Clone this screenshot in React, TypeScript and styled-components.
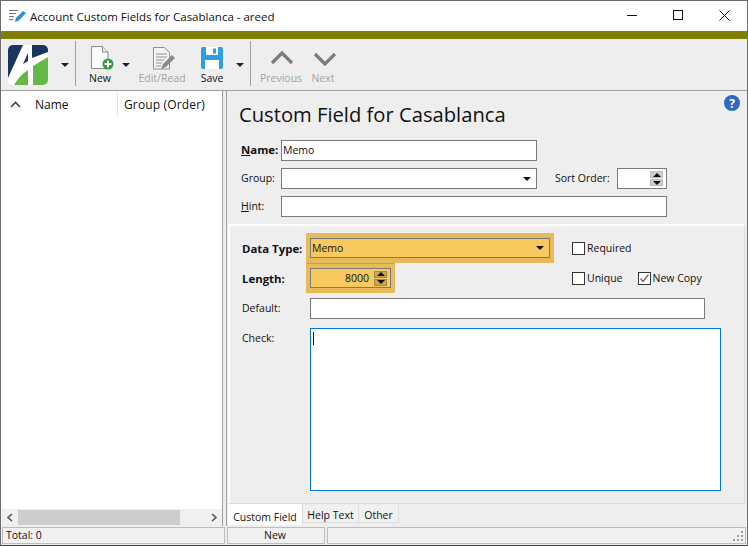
import { FC } from 'react';
import styled, { createGlobalStyle } from 'styled-components';

const Global = createGlobalStyle`
  html, body { margin: 0; padding: 0; background: #fff; }
  * { box-sizing: border-box; }
  body { font-family: "Open Sans", "Noto Sans", sans-serif; font-size: 10.5px; color: #111; }
`;

const Window = styled.div`
  width: 748px;
  height: 546px;
  display: flex;
  flex-direction: column;
  border: 1px solid #6d6d6d;
  border-bottom-color: #444;
  background: #eee;
  overflow: hidden;
`;

const TitleBar = styled.div`
  height: 30px;
  flex: none;
  background: #fff;
  display: flex;
  align-items: center;
  padding-left: 8px;
  font-size: 11.5px;
  color: #111;
`;

const TitleText = styled.div`
  margin-left: 3px;
  flex: 1;
`;

const WinButton = styled.div`
  width: 46px;
  height: 28px;
  align-self: flex-start;
  display: flex;
  align-items: center;
  justify-content: center;
`;

const ColorBar = styled.div`
  height: 8px;
  flex: none;
  background: #808000;
`;

const Toolbar = styled.div`
  height: 52px;
  flex: none;
  background: #eee;
  border-bottom: 1px solid #a0a0a0;
  display: flex;
  align-items: flex-start;
  padding: 2px 0 0 7px;
`;

const Separator = styled.div`
  width: 1px;
  height: 45px;
  background: #a0a0a0;
  margin: 0 9px 0 6px;
`;

const LogoBox = styled.div`
  width: 40px;
  height: 40px;
  margin-top: 4px;
  flex: none;
`;

const ToolButton = styled.div<{ $w: number; $off?: boolean }>`
  width: ${p => p.$w}px;
  flex: none;
  height: 46px;
  display: flex;
  flex-direction: column;
  align-items: center;
  font-size: 10.5px;
  line-height: 14px;
  color: ${p => (p.$off ? '#a3a3a3' : '#111')};
`;

const ToolIcon = styled.div`
  height: 29px;
  display: flex;
  align-items: flex-start;
  margin-bottom: 1px;
`;

const Caret = styled.div<{ $l: number; $r: number }>`
  width: 0;
  height: 0;
  flex: none;
  margin: 22px ${p => p.$r}px 0 ${p => p.$l}px;
  border-left: 4px solid transparent;
  border-right: 4px solid transparent;
  border-top: 4px solid #222;
`;

const Body = styled.div`
  flex: 1;
  min-height: 0;
  display: flex;
`;

const LeftPane = styled.div`
  width: 222px;
  flex: none;
  background: #fff;
  display: flex;
  flex-direction: column;
  border-right: 1px solid #a0a0a0;
`;

const GridHeader = styled.div`
  height: 27px;
  flex: none;
  display: flex;
  align-items: center;
  font-size: 12px;
`;

const SortCell = styled.div`
  width: 34px;
  padding-left: 9px;
  display: flex;
`;

const NameCell = styled.div`
  width: 83px;
  height: 24px;
  line-height: 24px;
  border-right: 1px solid #e4e4e4;
`;

const GroupCell = styled.div`
  padding-left: 6px;
  white-space: nowrap;
  letter-spacing: 0.15px;
`;

const GridBody = styled.div`
  flex: 1;
`;

const ScrollBar = styled.div`
  height: 17px;
  flex: none;
  background: #f0f0f0;
  display: flex;
  align-items: center;
`;

const ScrollArrow = styled.div`
  width: 17px;
  height: 17px;
  flex: none;
  display: flex;
  align-items: center;
  justify-content: center;
`;

const ScrollTrack = styled.div`
  flex: 1;
  height: 15px;
`;

const ScrollThumb = styled.div`
  width: 162px;
  height: 15px;
  background: #cdcdcd;
`;

const RightPane = styled.div`
  flex: 1;
  margin-left: 3px;
  background: #eee;
  border-left: 1px solid #a0a0a0;
  display: flex;
  flex-direction: column;
  position: relative;
`;

const Help = styled.div`
  position: absolute;
  right: 7px;
  top: 4px;
`;

const Heading = styled.h1`
  margin: 0;
  padding: 9px 0 0 12px;
  height: 49px;
  font-size: 20.2px;
  font-weight: 400;
  line-height: 28px;
  color: #111;
`;

const TopForm = styled.div`
  padding-left: 14px;
  width: 450px;
  display: flex;
  flex-direction: column;
  gap: 7px;
`;

const Row = styled.div`
  display: flex;
  align-items: center;
  height: 21px;

  label,
  span {
    padding-bottom: 2px;
  }
`;

const Label = styled.label<{ $w: number; $bold?: boolean; $top?: boolean }>`
  width: ${p => p.$w}px;
  flex: none;
  align-self: ${p => (p.$top ? 'flex-start' : 'auto')};
  margin-top: ${p => (p.$top ? '3px' : 0)};
  padding-bottom: ${p => (p.$bold || p.$top ? 0 : '2px')};
  font-size: ${p => (p.$bold ? '11.4px' : '10.5px')};
  font-weight: ${p => (p.$bold ? 700 : 400)};
  color: #111;
  white-space: nowrap;
`;

const Field = styled.div<{ $w: number; $h?: number; $accent?: boolean; $hot?: boolean }>`
  width: ${p => p.$w}px;
  height: ${p => p.$h ?? 21}px;
  flex: none;
  background: ${p => (p.$hot ? '#f8c95e' : '#fff')};
  border: 1px solid ${p => (p.$accent ? '#0078d7' : '#7a7a7a')};
  display: flex;
  align-items: center;
  justify-content: space-between;
  font-size: 10.5px;
  padding: 0 3px 0 1px;
  color: #111;
  position: relative;
`;

const FieldValue = styled.span<{ $right?: boolean }>`
  flex: 1;
  text-align: ${p => (p.$right ? 'right' : 'left')};
  padding-right: ${p => (p.$right ? '5px' : 0)};
`;

const Spin = styled.div`
  display: flex;
  flex-direction: column;
  gap: 1px;
`;

const SpinPart = styled.div<{ $hot?: boolean }>`
  width: 13px;
  height: 7px;
  background: ${p => (p.$hot ? '#c9a65a' : '#cfcfcf')};
  border: 1px solid ${p => (p.$hot ? '#a58a4c' : '#bbb')};
  display: flex;
  align-items: center;
  justify-content: center;
`;

const Up = styled.div`
  width: 0;
  height: 0;
  border-left: 4px solid transparent;
  border-right: 4px solid transparent;
  border-bottom: 4px solid #111;
`;

const Down = styled.div`
  width: 0;
  height: 0;
  border-left: 4px solid transparent;
  border-right: 4px solid transparent;
  border-top: 4px solid #111;
`;

const SelectCaret = styled.div`
  width: 0;
  height: 0;
  margin-right: 2px;
  border-left: 4px solid transparent;
  border-right: 4px solid transparent;
  border-top: 4px solid #111;
`;

const SortLabel = styled.span`
  width: 62px;
  flex: none;
  margin-left: 18px;
  font-size: 10.5px;
  white-space: nowrap;
`;

const TabPage = styled.div`
  margin: 7px 2px 0 1px;
  height: 280px;
  flex: none;
  border: 2px solid #fff;
  border-bottom: 1px solid #dcdcdc;
  border-right: 1px solid #dcdcdc;
  display: flex;
  flex-direction: column;
  padding: 7px 0 0 0;
`;

const PageRow = styled.div<{ $h: number; $mb?: number }>`
  height: ${p => p.$h}px;
  margin-bottom: ${p => p.$mb ?? 0}px;
  display: flex;
  align-items: center;
  padding-left: 12px;
`;

const Hot = styled.div<{ $line?: boolean }>`
  background: #e8bb5a;
  padding: 5px 4px;
  height: 30px;
  display: flex;
  flex: none;
  border-top: ${p => (p.$line ? '1px solid #e89a2c' : 'none')};
  padding-top: ${p => (p.$line ? '4px' : '5px')};
`;

const CheckWrap = styled.label<{ $ml: number }>`
  margin-left: ${p => p.$ml}px;
  display: flex;
  align-items: center;
  font-size: 10.5px;
  white-space: nowrap;
  color: #111;
`;

const CheckBox = styled.span`
  width: 13px;
  height: 13px;
  background: #fff;
  border: 1px solid #333;
  margin-right: 2px;
  display: flex;
  align-items: center;
  justify-content: center;
`;

const TextCursor = styled.div`
  position: absolute;
  left: 2px;
  top: 3px;
  width: 1px;
  height: 13px;
  background: #111;
`;

const TabStrip = styled.div`
  height: 22px;
  flex: none;
  margin: 0 0 0 1px;
  display: flex;
  align-items: flex-start;
`;

const Tab = styled.div<{ $w: number; $active?: boolean }>`
  width: ${p => p.$w}px;
  height: ${p => (p.$active ? 21 : 18)}px;
  margin-top: ${p => (p.$active ? 0 : 1)}px;
  padding-top: ${p => (p.$active ? 6 : 3)}px;
  background: ${p => (p.$active ? '#fff' : '#f1f1f1')};
  border-right: 1px solid #dcdcdc;
  border-bottom: ${p => (p.$active ? 'none' : '1px solid #dcdcdc')};
  font-size: 10.5px;
  line-height: 14px;
  color: #111;
  text-align: center;
  white-space: nowrap;
`;

const StatusBar = styled.div`
  height: 19px;
  flex: none;
  display: flex;
  gap: 2px;
  background: #eee;
  padding: 1px 1px 0 1px;
`;

const StatusCell = styled.div<{ $w?: number; $center?: boolean }>`
  width: ${p => (p.$w ? `${p.$w}px` : 'auto')};
  flex: ${p => (p.$w ? 'none' : 1)};
  height: 17px;
  background: #f1f1f1;
  border: 1px solid #bdbdbd;
  font-size: 10.5px;
  line-height: 15px;
  padding-left: ${p => (p.$center ? 0 : 3)}px;
  padding-right: ${p => (p.$center ? 2 : 0)}px;
  text-align: ${p => (p.$center ? 'center' : 'left')};
  position: relative;
`;

const Grip = styled.svg`
  position: absolute;
  right: 1px;
  bottom: 1px;
`;

const Logo: FC = () => (
  <svg width="40" height="40" viewBox="0 0 40 40">
    <rect width="40" height="40" rx="5" fill="#fff" />
    <path d="M0 33V5a5 5 0 0 1 5-5h10Z" fill="#1b365d" />
    <path d="M24 0h11a5 5 0 0 1 5 5v2L24 13Z" fill="#1b365d" />
    <path d="M20 8v8l-5 3Z" fill="#1b365d" />
    <path d="M6 40C10 33 15 28 20 25v15Z" fill="#66b947" />
    <path d="M25 21c5-3 10-6 15-9v23a5 5 0 0 1-5 5H25Z" fill="#66b947" />
  </svg>
);

const NewIcon: FC = () => (
  <svg width="30" height="29" viewBox="0 0 30 29">
    <path d="M6.500 5.500h11l5.500 5.500v16.500H6.500Z" fill="#fbfbfb" stroke="#8a8a8a" />
    <path d="M17.500 5.500v5.500h5.500" fill="#eee" stroke="#8a8a8a" />
    <circle cx="23" cy="23" r="5.500" fill="#2e9b3e" />
    <path d="M23 19.500v7M19.500 23h7" stroke="#fff" strokeWidth="2" />
  </svg>
);

const EditIcon: FC = () => (
  <svg width="30" height="29" viewBox="0 0 30 29">
    <path d="M6.500 6.500h11l5 5v16.500h-16Z" fill="#f4f4f4" stroke="#8f8f8f" />
    <path d="M9 13h11M9 16h11M9 19h8M9 22h6M9 25h5" stroke="#8f8f8f" />
    <path d="M14 28l2-5 9-9 3 3-9 9Z" fill="#8a8a8a" />
  </svg>
);

const SaveIcon: FC = () => (
  <svg width="22" height="29" viewBox="0 0 22 29">
    <path d="M0 8a2 2 0 0 1 2-2h18a2 2 0 0 1 2 2v18a2 2 0 0 1-2 2H2a2 2 0 0 1-2-2Z" fill="#2d9ee0" />
    <rect x="5" y="6" width="12" height="8" fill="#fff" />
    <rect x="12" y="7.500" width="3" height="5" fill="#2d9ee0" />
    <rect x="4" y="19" width="14" height="9" fill="#fff" />
  </svg>
);

const ChevronUp: FC = () => (
  <svg width="26" height="29" viewBox="0 0 26 29">
    <path d="M4 22 14 12 24 22" fill="none" stroke="#7c7c7c" strokeWidth="3.200" />
  </svg>
);

const ChevronDown: FC = () => (
  <svg width="26" height="29" viewBox="0 0 26 29">
    <path d="M5 13 15 23 25 13" fill="none" stroke="#7c7c7c" strokeWidth="3.200" />
  </svg>
);

const TitleIcon: FC = () => (
  <svg width="18" height="14" viewBox="0 0 18 14">
    <path d="M0 1.500h9M0 4.500h7M0 7.500h5M0 10.500h4" stroke="#777" />
    <path d="M6 13l1-4 7-7 3 2-7 7.500Z" fill="#2b8fd8" />
  </svg>
);

const Spinner: FC<{ hot?: boolean }> = ({ hot }) => (
  <Spin>
    <SpinPart $hot={hot}><Up /></SpinPart>
    <SpinPart $hot={hot}><Down /></SpinPart>
  </Spin>
);

const Check: FC<{ label: string; ml: number; checked?: boolean }> = ({ label, ml, checked }) => (
  <CheckWrap $ml={ml}>
    <CheckBox>
      {checked && (
        <svg width="11" height="11" viewBox="0 0 11 11">
          <path d="M1.500 5.500 4 8.500 9.500 1.500" fill="none" stroke="#666" strokeWidth="1.300" />
        </svg>
      )}
    </CheckBox>
    {label}
  </CheckWrap>
);

export default function App() {
  return (
    <Window>
      <Global />
      <TitleBar>
        <TitleIcon />
        <TitleText>Account Custom Fields for Casablanca - areed</TitleText>
        <WinButton>
          <svg width="11" height="11" viewBox="0 0 11 11"><path d="M0 5.500h10" stroke="#111" /></svg>
        </WinButton>
        <WinButton>
          <svg width="11" height="11" viewBox="0 0 11 11"><rect x="0.500" y="0.500" width="9" height="9" fill="none" stroke="#111" /></svg>
        </WinButton>
        <WinButton>
          <svg width="11" height="11" viewBox="0 0 11 11"><path d="M0.500 0.500l10 10M10.500 0.500l-10 10" stroke="#111" /></svg>
        </WinButton>
      </TitleBar>
      <ColorBar />
      <Toolbar>
        <LogoBox><Logo /></LogoBox>
        <Caret $l={13} $r={0} />
        <Separator />
        <ToolButton $w={30}>
          <ToolIcon><NewIcon /></ToolIcon>
          New
        </ToolButton>
        <Caret $l={7} $r={2} />
        <ToolButton $w={60} $off>
          <ToolIcon><EditIcon /></ToolIcon>
          Edit/Read
        </ToolButton>
        <ToolButton $w={40}>
          <ToolIcon><SaveIcon /></ToolIcon>
          Save
        </ToolButton>
        <Caret $l={4} $r={0} />
        <Separator />
        <ToolButton $w={42} $off>
          <ToolIcon><ChevronUp /></ToolIcon>
          Previous
        </ToolButton>
        <ToolButton $w={42} $off>
          <ToolIcon><ChevronDown /></ToolIcon>
          Next
        </ToolButton>
      </Toolbar>
      <Body>
        <LeftPane>
          <GridHeader>
            <SortCell>
              <svg width="11" height="7" viewBox="0 0 11 7"><path d="M1 6 5.500 1.500 10 6" fill="none" stroke="#444" strokeWidth="1.600" /></svg>
            </SortCell>
            <NameCell>Name</NameCell>
            <GroupCell>Group (Order)</GroupCell>
          </GridHeader>
          <GridBody />
          <ScrollBar>
            <ScrollArrow>
              <svg width="8" height="9" viewBox="0 0 8 9"><path d="M6 1 2 4.500 6 8" fill="none" stroke="#555" strokeWidth="1.600" /></svg>
            </ScrollArrow>
            <ScrollTrack><ScrollThumb /></ScrollTrack>
            <ScrollArrow>
              <svg width="8" height="9" viewBox="0 0 8 9"><path d="M2 1 6 4.500 2 8" fill="none" stroke="#555" strokeWidth="1.600" /></svg>
            </ScrollArrow>
          </ScrollBar>
        </LeftPane>
        <RightPane>
          <Help>
            <svg width="16" height="16" viewBox="0 0 16 16">
              <circle cx="8" cy="8" r="8" fill="#2f68c4" />
              <text x="8" y="12.500" textAnchor="middle" fontSize="12" fontWeight="700" fill="#fff" fontFamily="Open Sans, sans-serif">?</text>
            </svg>
          </Help>
          <Heading>Custom Field for Casablanca</Heading>
          <TopForm>
            <Row>
              <Label $w={40} $bold><u>N</u>ame:</Label>
              <Field $w={256}><FieldValue>Memo</FieldValue></Field>
            </Row>
            <Row>
              <Label $w={40}>Group:</Label>
              <Field $w={256}><FieldValue /><SelectCaret /></Field>
              <SortLabel>Sort Order:</SortLabel>
              <Field $w={50}><FieldValue /><Spinner /></Field>
            </Row>
            <Row>
              <Label $w={40}><u>H</u>int:</Label>
              <Field $w={386}><FieldValue /></Field>
            </Row>
          </TopForm>
          <TabPage>
            <PageRow $h={30}>
              <Label $w={64} $bold>Data Type:</Label>
              <Hot><Field $w={240} $h={20} $hot><FieldValue>Memo</FieldValue><SelectCaret /></Field></Hot>
              <Check label="Required" ml={18} />
            </PageRow>
            <PageRow $h={30} $mb={5}>
              <Label $w={64} $bold>Length:</Label>
              <Hot $line><Field $w={81} $h={20} $hot><FieldValue $right>8000</FieldValue><Spinner hot /></Field></Hot>
              <Check label="Unique" ml={177} />
              <Check label="New Copy" ml={15} checked />
            </PageRow>
            <PageRow $h={21} $mb={9}>
              <Label $w={68}>Default:</Label>
              <Field $w={395}><FieldValue /></Field>
            </PageRow>
            <PageRow $h={163}>
              <Label $w={68} $top>Check:</Label>
              <Field $w={411} $h={163} $accent><TextCursor /></Field>
            </PageRow>
          </TabPage>
          <TabStrip>
            <Tab $w={75} $active>Custom Field</Tab>
            <Tab $w={56}>Help Text</Tab>
            <Tab $w={40}>Other</Tab>
          </TabStrip>
        </RightPane>
      </Body>
      <StatusBar>
        <StatusCell $w={223}>Total: 0</StatusCell>
        <StatusCell $w={98} $center>New</StatusCell>
        <StatusCell>
          <Grip width="12" height="12" viewBox="0 0 12 12">
            <path d="M9 1h2v2H9ZM5 5h2v2H5ZM9 5h2v2H9ZM1 9h2v2H1ZM5 9h2v2H5ZM9 9h2v2H9Z" fill="#a0a0a0" />
          </Grip>
        </StatusCell>
      </StatusBar>
    </Window>
  );
}
